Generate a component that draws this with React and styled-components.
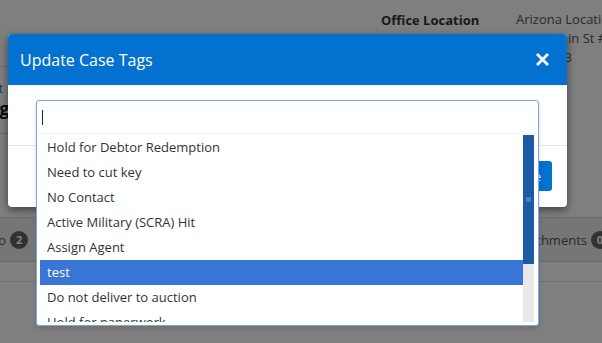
import React from "react";
import styled, { createGlobalStyle } from "styled-components";

const GlobalStyle = createGlobalStyle`
  html, body {
    margin: 0;
    padding: 0;
    background: #ffffff;
    font-family: "Open Sans", "Liberation Sans", sans-serif;
    overflow: hidden;
  }
`;

const Page = styled.div`
  position: relative;
  width: 602px;
  height: 343px;
  overflow: hidden;
  background: #ffffff;
  color: #333;
  font-size: 13px;
`;

const InfoRow = styled.div`
  display: grid;
  grid-template-columns: 300px 81px 135px 1fr;
  height: 48px;
  padding-top: 10px;
  box-sizing: border-box;
`;

const LeftCell = styled.div`
  border-bottom: 1px solid #dcdcdc;
  margin-top: 37px;
`;

const Label = styled.div`
  font-weight: 700;
  color: #333;
  line-height: 20px;
`;

const Value = styled.div`
  color: #555;
  line-height: 19px;
  white-space: nowrap;
`;

const Section = styled.div`
  height: 86px;
  width: 9px;
  border-bottom: 1px solid #d6d6d6;
  box-sizing: border-box;
  display: flex;
  flex-direction: column;
  align-items: flex-end;
  padding-top: 34px;
  white-space: nowrap;
`;

const Link = styled.span`
  color: #1e6fc4;
  font-size: 12px;
  line-height: 14px;
  margin-right: 6px;
`;

const SideTitle = styled.div`
  font-weight: 700;
  font-size: 17px;
  color: #111;
  line-height: 26px;
`;

const Gap = styled.div`
  height: 83px;
`;

const Tabs = styled.div`
  height: 45px;
  background: #ececec;
  border-top: 1px solid #dadada;
  border-bottom: 1px solid #d4d4d4;
  box-sizing: border-box;
  display: flex;
  align-items: center;
  justify-content: space-between;
  font-size: 13px;
  color: #555;
  white-space: nowrap;
`;

const Tab = styled.div`
  display: flex;
  align-items: center;
  gap: 4px;
  margin-left: ${(p) => p.offset || 0}px;
  margin-right: ${(p) => p.trail || 0}px;
`;

const Badge = styled.span`
  display: inline-flex;
  align-items: center;
  justify-content: center;
  min-width: 18px;
  height: 18px;
  border-radius: 9px;
  background: #626262;
  color: #fff;
  font-size: 11px;
  font-weight: 700;
`;

const SubBar = styled.div`
  height: 19px;
  border-bottom: 1px solid #dcdcdc;
`;

const Backdrop = styled.div`
  position: absolute;
  inset: 0;
  background: rgba(0, 0, 0, 0.5);
`;

const Modal = styled.div`
  position: absolute;
  left: 8px;
  top: 34px;
  width: 559px;
  height: 173px;
  background: #fff;
  border-radius: 4px;
  overflow: hidden;
  box-shadow: 0 3px 9px rgba(0, 0, 0, 0.5);
  display: flex;
  flex-direction: column;
`;

const ModalHeader = styled.div`
  height: 51px;
  background: #0271cf;
  color: #fff;
  display: flex;
  align-items: center;
  justify-content: space-between;
  padding: 0 18px 0 12px;
  flex-shrink: 0;
`;

const Title = styled.h4`
  margin: 0;
  font-size: 16px;
  font-weight: 400;
`;

const Close = styled.button`
  border: 0;
  background: none;
  padding: 0;
  display: flex;
  color: #fff;
`;

const ModalBody = styled.div`
  height: 60px;
  border-bottom: 1px solid #e5e5e5;
`;

const ModalFooter = styled.div`
  flex: 1;
  display: flex;
  align-items: flex-start;
  justify-content: flex-end;
  padding: 15px 15px 0 0;
`;

const Button = styled.button`
  height: 30px;
  padding: 0 11px 0 12px;
  border: 0;
  border-radius: 3px;
  background: #0271cf;
  color: #fff;
  font-family: inherit;
  font-size: 13px;
`;

const Dropdown = styled.div`
  position: absolute;
  left: 36px;
  top: 100px;
  width: 503px;
  height: 226px;
  box-sizing: border-box;
  background: #fff;
  border: 1px solid #7ba7ec;
  border-radius: 3px;
  display: flex;
  flex-direction: column;
  box-shadow: 0 2px 4px rgba(0, 0, 0, 0.15);
`;

const Search = styled.div`
  height: 32px;
  flex-shrink: 0;
  display: flex;
  align-items: center;
  padding-left: 5px;
  border-bottom: 1px solid #f4f4f4;
`;

const Caret = styled.span`
  width: 1px;
  height: 15px;
  background: #222;
`;

const Results = styled.div`
  flex: 1;
  min-height: 0;
  display: flex;
  margin: 1px 4px 3px 3px;
`;

const List = styled.ul`
  list-style: none;
  margin: 0;
  padding: 0;
  flex: 1;
  overflow: hidden;
`;

const Option = styled.li`
  height: 25px;
  line-height: 25px;
  padding-left: 7px;
  font-size: 13px;
  color: ${(p) => (p.active ? "#fff" : "#333")};
  background: ${(p) => (p.active ? "#3875d7" : "transparent")};
  white-space: nowrap;
`;

const ScrollTrack = styled.div`
  width: 11px;
  flex-shrink: 0;
  background: #e8e8e8;
  display: flex;
  flex-direction: column;
`;

const Thumb = styled.div`
  height: ${(p) => p.size * 100}%;
  background: #1b5ba6;
  display: flex;
  align-items: center;
  justify-content: center;

  &::after {
    content: "";
    width: 5px;
    height: 5px;
    background: #4a7cc0;
  }
`;

const options = [
  "Hold for Debtor Redemption",
  "Need to cut key",
  "No Contact",
  "Active Military (SCRA) Hit",
  "Assign Agent",
  "test",
  "Do not deliver to auction",
  "Hold for paperwork",
  "Keys Received",
  "Personal Property",
  "Repossessed",
];

const visibleRows = 7.5;

export default function App() {
  return (
    <>
      <GlobalStyle />
      <Page>
        <InfoRow>
          <LeftCell />
          <div />
          <Label>Office Location</Label>
          <div>
            <Value>Arizona Location</Value>
            <Value>1234 Main St #5</Value>
            <Value>Suite 203</Value>
          </div>
        </InfoRow>
        <Section>
          <Link>Edit</Link>
          <SideTitle>Tracking</SideTitle>
        </Section>
        <Gap />
        <Tabs>
          <Tab offset={-30}>
            Photo <Badge>2</Badge>
          </Tab>
          <Tab trail={-7}>
            Attachments <Badge>0</Badge>
          </Tab>
        </Tabs>
        <SubBar />

        <Backdrop />

        <Modal>
          <ModalHeader>
            <Title>Update Case Tags</Title>
            <Close aria-label="Close">
              <svg width="13" height="13" viewBox="0 0 13 13">
                <path
                  d="M2 2 L11 11 M11 2 L2 11"
                  stroke="#fff"
                  strokeWidth="2.8"
                  strokeLinecap="square"
                />
              </svg>
            </Close>
          </ModalHeader>
          <ModalBody />
          <ModalFooter>
            <Button>Save</Button>
          </ModalFooter>
        </Modal>

        <Dropdown>
          <Search>
            <Caret />
          </Search>
          <Results>
            <List>
              {options.map((o) => (
                <Option key={o} active={o === "test"}>
                  {o}
                </Option>
              ))}
            </List>
            <ScrollTrack>
              <Thumb size={visibleRows / (options.length - 0.1)} />
            </ScrollTrack>
          </Results>
        </Dropdown>
      </Page>
    </>
  );
}
